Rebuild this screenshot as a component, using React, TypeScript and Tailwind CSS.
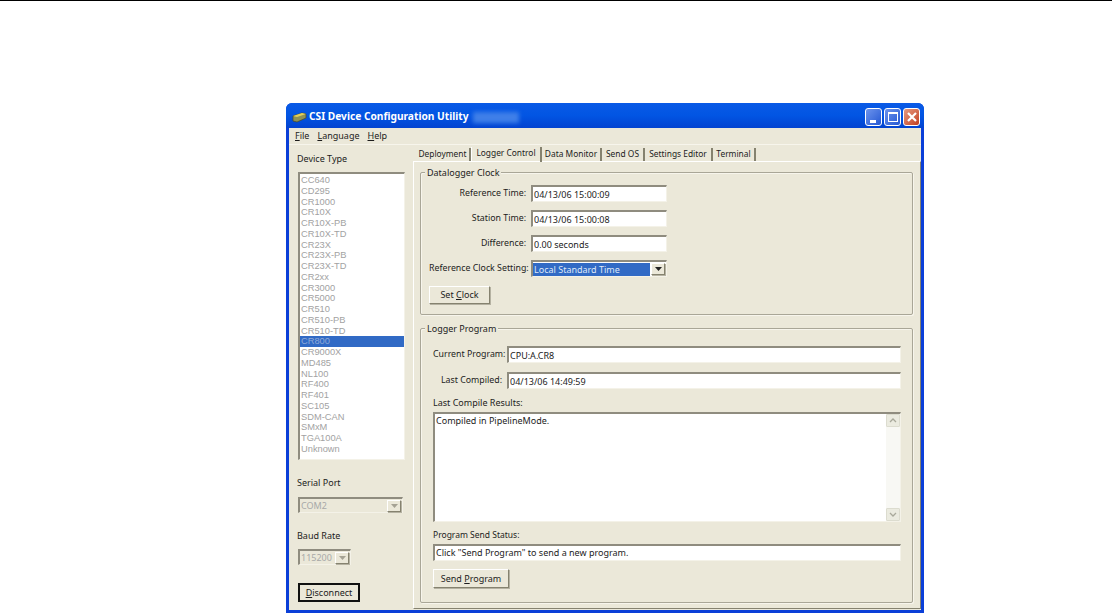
import React from 'react';

const devices = [
    'CC640', 'CD295', 'CR1000', 'CR10X', 'CR10X-PB', 'CR10X-TD', 'CR23X', 'CR23X-PB', 'CR23X-TD',
    'CR2xx', 'CR3000', 'CR5000', 'CR510', 'CR510-PB', 'CR510-TD', 'CR800', 'CR9000X', 'MD485',
    'NL100', 'RF400', 'RF401', 'SC105', 'SDM-CAN', 'SMxM', 'TGA100A', 'Unknown',
];

const tabs = [
    { label: 'Deployment', width: 'w-[55px]' },
    { label: 'Logger Control', width: 'w-[71px]' },
    { label: 'Data Monitor', width: 'w-[60px]' },
    { label: 'Send OS', width: 'w-[43px]' },
    { label: 'Settings Editor', width: 'w-[68px]' },
    { label: 'Terminal', width: 'w-[43px]' },
];

const sunken = 'border border-t-2 border-l-2 border-t-[#8f8c7f] border-l-[#8f8c7f] border-r-[#f4f2e8] border-b-[#f4f2e8] bg-white';
const raised = 'border border-t-white border-l-white border-r-[#85826f] border-b-[#85826f] bg-[#ebe8d9] shadow-[1px_1px_0_#b5b2a2]';

function Key({ children }: { children: string }) {
    return <span className="underline underline-offset-1">{children}</span>;
}

function Arrow({ muted }: { muted?: boolean }) {
    return (
        <div className={`flex h-[12px] w-[14px] items-center justify-center ${raised}`}>
            <svg width="7" height="4" viewBox="0 0 7 4">
                <path d="M0 0h7L3.5 4z" fill={muted ? '#a5a294' : '#222'} />
            </svg>
        </div>
    );
}

function Field({ label, value, labelWidth, width }: { label: string; value: string; labelWidth: string; width: string }) {
    return (
        <div className="flex h-[17px] items-center">
            <div className={`${labelWidth} whitespace-nowrap pr-[5px] text-right text-[8.8px]`}>{label}</div>
            <div className={`flex h-[17px] items-center pl-[1px] leading-none ${width} ${sunken}`}>{value}</div>
        </div>
    );
}

function Group({ title, className, children }: { title: string; className: string; children: React.ReactNode }) {
    return (
        <div className={`relative rounded-[2px] border border-[#a9a697] shadow-[inset_1px_1px_0_#f7f5ec,1px_1px_0_#f7f5ec] ${className}`}>
            <div className="absolute -top-[7px] left-[4px] bg-[#ebe8d9] px-[2px] leading-[13px]">{title}</div>
            {children}
        </div>
    );
}

export default function App() {
    return (
        <div className="h-[613px] w-[1112px] overflow-hidden bg-white font-['Noto_Sans',sans-serif] text-[9px] text-[#1c1c1c]">
            <div className="h-px bg-black" />
            <div className="ml-[286px] mt-[102px] flex h-[510px] w-[638px] flex-col rounded-t-[6px] bg-[#0a3fd8] px-[3px] pb-[3px]">
                {/* Title bar */}
                <div className="-mx-[3px] flex h-[25px] shrink-0 items-center rounded-t-[6px] bg-gradient-to-b from-[#0a5ae6] via-[#0255e3] to-[#0343d0] pl-[6px] pr-[4px] pt-[3px]">
                    <svg width="15" height="11" viewBox="0 0 15 11" className="mr-[2px]">
                        <path d="M1 4l9-3 4 1v4l-9 4-4-1z" fill="#8f9255" stroke="#4a4a20" strokeWidth=".7" />
                        <path d="M1 4l9-3 4 1-9 3z" fill="#e2cf5a" />
                    </svg>
                    <span className="whitespace-nowrap text-[10.2px] font-bold text-white">CSI Device Configuration Utility</span>
                    <div className="ml-[4px] h-[11px] w-[46px] bg-[#3f7fe8] blur-[2px]" />
                    <div className="ml-auto flex gap-[2px]">
                        <div className="flex h-[18px] w-[17px] items-end rounded-[3px] border border-white bg-gradient-to-br from-[#6d93ec] to-[#2457d3] pb-[2px] pl-[4px]">
                            <div className="h-[3px] w-[6px] bg-white" />
                        </div>
                        <div className="flex h-[18px] w-[17px] items-center justify-center rounded-[3px] border border-white bg-gradient-to-br from-[#6d93ec] to-[#2457d3]">
                            <div className="h-[10px] w-[10px] border border-t-2 border-white" />
                        </div>
                        <div className="flex h-[18px] w-[17px] items-center justify-center rounded-[3px] border border-white bg-gradient-to-br from-[#e59a80] to-[#c23c1c]">
                            <svg width="12" height="12" viewBox="0 0 12 12">
                                <path d="M2 2l8 8M10 2l-8 8" stroke="#fff" strokeWidth="2.2" />
                            </svg>
                        </div>
                    </div>
                </div>

                {/* Menu */}
                <div className="flex h-[17px] shrink-0 items-center gap-[8px] border-b border-[#f7f5ec] bg-[#ebe8d9] pl-[6px]">
                    <span><Key>F</Key>ile</span>
                    <span><Key>L</Key>anguage</span>
                    <span><Key>H</Key>elp</span>
                </div>

                <div className="flex min-h-0 flex-1 bg-[#ebe8d9]">
                    {/* Device panel */}
                    <div className="flex w-[124px] shrink-0 flex-col pl-[8px]">
                        <div className="mt-[7px] h-[13px] leading-[13px]">Device Type</div>
                        <div className={`ml-px mt-[7px] h-[288px] w-[107px] pt-[1px] font-['Liberation_Sans',sans-serif] text-[9.3px] text-[#a2a2a2] ${sunken}`}>
                            {devices.map((device) => (
                                <div
                                    key={device}
                                    className={`h-[10.76px] pl-[1px] leading-[10.76px] ${device === 'CR800' ? 'bg-[#316ac5] text-[#8fa9d8]' : ''}`}
                                >
                                    {device}
                                </div>
                            ))}
                        </div>
                        <div className="mt-[16px] leading-[13px]">Serial Port</div>
                        <div className={`ml-px mt-[8px] flex h-[16px] w-[105px] items-center justify-between pl-[1px] pr-px text-[#a8a8a8] !bg-[#ebe8d9] ${sunken}`}>
                            COM2
                            <Arrow muted />
                        </div>
                        <div className="mt-[16px] leading-[13px]">Baud Rate</div>
                        <div className={`ml-px mt-[7px] flex h-[16px] w-[53px] items-center justify-between pl-[1px] pr-px text-[#a8a8a8] !bg-[#ebe8d9] ${sunken}`}>
                            115200
                            <Arrow muted />
                        </div>
                        <div className="ml-px mt-[18px] flex h-[19px] w-[62px] items-center justify-center border-2 border-[#111] bg-[#ebe8d9]">
                            <span><Key>D</Key>isconnect</span>
                        </div>
                    </div>

                    {/* Tabs */}
                    <div className="flex min-w-0 flex-1 flex-col">
                        <div className="flex h-[16px] shrink-0 items-end pl-[3px] text-[8.4px]">
                            {tabs.map((tab) => (
                                <div
                                    key={tab.label}
                                    className={tab.label === 'Logger Control'
                                        ? `z-10 -mb-px flex h-[15px] items-center justify-center whitespace-nowrap border-r-2 border-r-[#85826f] border-l border-l-white pb-[2px] ${tab.width}`
                                        : `flex h-[13px] items-center justify-center whitespace-nowrap border-r-2 border-r-[#85826f] ${tab.width}`}
                                >
                                    {tab.label}
                                </div>
                            ))}
                        </div>
                        <div className="mb-px flex min-h-0 flex-1 flex-col border border-t-white border-l-white border-r-[#85826f] border-b-[#85826f] pl-[6px] pr-[7px] pt-[10px]">
                            <Group title="Datalogger Clock" className="h-[143px] shrink-0 pl-[8px] pt-[12px]">
                                <div className="flex flex-col gap-[8px]">
                                    <Field label="Reference Time:" value="04/13/06 15:00:09" labelWidth="w-[102px]" width="w-[136px]" />
                                    <Field label="Station Time:" value="04/13/06 15:00:08" labelWidth="w-[102px]" width="w-[136px]" />
                                    <Field label="Difference:" value="0.00 seconds" labelWidth="w-[102px]" width="w-[136px]" />
                                    <div className="flex h-[17px] items-center">
                                        <div className="w-[102px] whitespace-nowrap pr-[5px] text-right text-[8.8px]">Reference Clock Setting:</div>
                                        <div className={`flex h-[17px] w-[136px] items-center pr-px ${sunken}`}>
                                            <div className="mr-px h-[13px] flex-1 bg-[#316ac5] pl-px leading-[13px] text-[#dfe8f7]">Local Standard Time</div>
                                            <Arrow />
                                        </div>
                                    </div>
                                </div>
                                <div className={`mt-[9px] flex h-[18px] w-[61px] items-center justify-center ${raised}`}>
                                    <span>Set <Key>C</Key>lock</span>
                                </div>
                            </Group>
                            <Group title="Logger Program" className="mt-[13px] h-[275px] shrink-0 pl-[12px] pt-[17px]">
                                <div className="flex flex-col gap-[9px]">
                                    <Field label="Current Program:" value="CPU:A.CR8" labelWidth="w-[74px]" width="w-[394px]" />
                                    <Field label="Last Compiled:" value="04/13/06 14:49:59" labelWidth="w-[74px]" width="w-[394px]" />
                                </div>
                                <div className="mt-[7px] leading-[13px]">Last Compile Results:</div>
                                <div className={`mt-[3px] flex h-[110px] w-[468px] ${sunken}`}>
                                    <div className="flex-1 pl-[1px] leading-[13px]">Compiled in PipelineMode.</div>
                                    <div className="flex w-[14px] flex-col justify-between bg-[#f8f8f4]">
                                        <div className="flex h-[13px] items-center justify-center rounded-[1px] border border-[#dcdccf] bg-[#ebebe0]">
                                            <svg width="8" height="5" viewBox="0 0 8 5"><path d="M1 4l3-3 3 3" fill="none" stroke="#a9a99b" strokeWidth="1.3" /></svg>
                                        </div>
                                        <div className="flex h-[13px] items-center justify-center rounded-[1px] border border-[#dcdccf] bg-[#ebebe0]">
                                            <svg width="8" height="5" viewBox="0 0 8 5"><path d="M1 1l3 3 3-3" fill="none" stroke="#a9a99b" strokeWidth="1.3" /></svg>
                                        </div>
                                    </div>
                                </div>
                                <div className="mt-[6px] text-[8.5px] leading-[13px]">Program Send Status:</div>
                                <div className={`mt-[3px] flex h-[17px] w-[468px] items-center pl-px ${sunken}`}>Click "Send Program" to send a new program.</div>
                                <div className={`mt-[8px] flex h-[19px] w-[76px] items-center justify-center ${raised}`}>
                                    <span>Send <Key>P</Key>rogram</span>
                                </div>
                            </Group>
                        </div>
                    </div>
                </div>
            </div>
        </div>
    );
}
